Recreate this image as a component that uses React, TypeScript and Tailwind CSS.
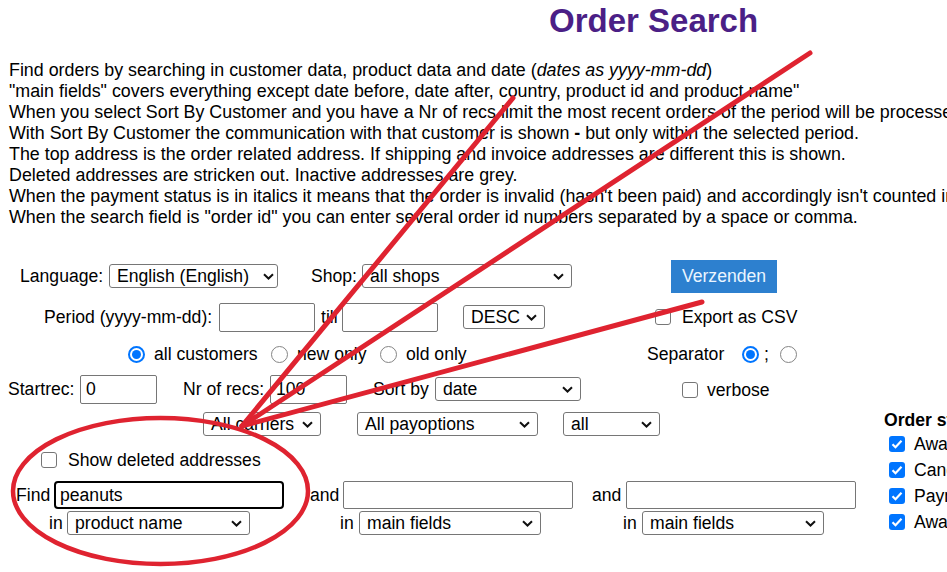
import React from "react";

const Chevron = () => (
  <svg width="11" height="7" viewBox="0 0 11 7" className="shrink-0">
    <path d="M1 1.2l4.5 4.3L10 1.2" fill="none" stroke="#111" strokeWidth="2" />
  </svg>
);

const Select = ({ value, className }: { value: string; className: string }) => (
  <div
    className={`flex items-center justify-between shrink-0 h-[24px] border border-[#767676] rounded-[3px] bg-white pl-[7px] pr-[7px] pt-[1px] ${className}`}
  >
    <span>{value}</span>
    <Chevron />
  </div>
);

const Input = ({ value, className }: { value?: string; className: string }) => (
  <div
    className={`flex items-center shrink-0 h-[29px] border border-[#767676] rounded-[2px] bg-white pl-[5px] pt-[1px] ${className}`}
  >
    {value}
  </div>
);

const Checkbox = ({ className }: { className?: string }) => (
  <div className={`shrink-0 w-[16px] h-[16px] border border-[#767676] rounded-[3px] bg-white ${className ?? ""}`} />
);

const CheckedBox = () => (
  <div className="shrink-0 w-[16px] h-[16px] rounded-[3px] bg-[#0075ff] flex items-center justify-center">
    <svg width="12" height="10" viewBox="0 0 12 10">
      <path d="M1.5 5.2l3 3L10.5 1.8" fill="none" stroke="white" strokeWidth="2.2" />
    </svg>
  </div>
);

const Radio = ({ checked }: { checked?: boolean }) =>
  checked ? (
    <div className="shrink-0 w-[17px] h-[17px] rounded-full border-2 border-[#0075ff] p-[2px] bg-white">
      <div className="w-full h-full rounded-full bg-[#0075ff]" />
    </div>
  ) : (
    <div className="shrink-0 w-[17px] h-[17px] rounded-full border border-[#858585] bg-white" />
  );

const statuses = ["Awaiting payment", "Cancelled", "Payment accepted", "Awaiting shipment"];

export default function App() {
  return (
    <div className="relative w-full h-[572px] overflow-hidden bg-white text-black font-['Liberation_Sans',Arial,sans-serif] text-[17.6px] whitespace-nowrap">
      {/* title */}
      <div className="mt-[2px] pl-[549px] leading-[38px] text-[33px] font-bold text-[#4b1f86]">
        Order Search
      </div>

      {/* intro text */}
      <div className="mt-[20px] pl-[9px] leading-[21px] text-[17.85px]">
        <div>
          Find orders by searching in customer data, product data and date (<i>dates as yyyy-mm-dd</i>)
        </div>
        <div>"main fields" covers everything except date before, date after, country, product id and product name"</div>
        <div>
          When you select Sort By Customer and you have a Nr of recs limit the most recent orders of the period will be processed.
        </div>
        <div>
          With Sort By Customer the communication with that customer is shown <b>-</b> but only within the selected period.
        </div>
        <div>The top address is the order related address. If shipping and invoice addresses are different this is shown.</div>
        <div>Deleted addresses are stricken out. Inactive addresses are grey.</div>
        <div>
          When the payment status is in italics it means that the order is invalid (hasn't been paid) and accordingly isn't counted in the totals.
        </div>
        <div>When the search field is "order id" you can enter several order id numbers separated by a space or comma.</div>
      </div>

      {/* form */}
      <div className="mt-[29px] leading-none">
        <div className="flex items-center h-[38px] pl-[20px]">
          <span className="shrink-0 w-[89px] pt-[2px]">Language:</span>
          <Select value="English (English)" className="w-[169px] !pr-[3px]" />
          <span className="shrink-0 ml-[33px] w-[51px] pt-[2px]">Shop:</span>
          <Select value="all shops" className="w-[210px]" />
          <button className="shrink-0 ml-[99px] w-[106px] h-[33px] bg-[#2d80cf] text-[#eaf5ff] pt-[1px]">Verzenden</button>
        </div>

        <div className="flex items-center h-[44px] pl-[44px]">
          <span className="shrink-0 w-[175px] pt-[2px]">Period (yyyy-mm-dd):</span>
          <Input className="w-[96px]" />
          <span className="shrink-0 ml-[6px] w-[21px] pt-[2px]">till</span>
          <Input className="w-[96px]" />
          <Select value="DESC" className="ml-[25px] w-[82px]" />
          <Checkbox className="ml-[110px]" />
          <span className="shrink-0 ml-[11px] pt-[2px]">Export as CSV</span>
        </div>

        <div className="flex items-center h-[30px] pl-[128px]">
          <Radio checked />
          <span className="shrink-0 ml-[9px] w-[117px] pt-[2px]">all customers</span>
          <Radio />
          <span className="shrink-0 ml-[9px] w-[83px] pt-[2px]">new only</span>
          <Radio />
          <span className="shrink-0 ml-[9px] w-[241px] pt-[2px]">old only</span>
          <span className="shrink-0 w-[95px] pt-[2px]">Separator</span>
          <Radio checked />
          <span className="shrink-0 ml-[5px] w-[16px] pt-[2px]">;</span>
          <Radio />
        </div>

        <div className="flex items-center h-[40px] pl-[8px]">
          <span className="shrink-0 w-[72px] pt-[2px]">Startrec:</span>
          <Input value="0" className="w-[77px]" />
          <span className="shrink-0 ml-[26px] w-[87px] pt-[2px]">Nr of recs:</span>
          <Input value="100" className="w-[77px]" />
          <span className="shrink-0 ml-[26px] w-[62px] pt-[2px]">Sort by</span>
          <Select value="date" className="w-[146px]" />
          <Checkbox className="ml-[101px] mt-[2px]" />
          <span className="shrink-0 ml-[9px] pt-[3px]">verbose</span>
        </div>

        <div className="flex">
          <div className="shrink-0 w-[884px]">
            <div className="flex items-center h-[30px] pl-[203px]">
              <Select value="All carriers" className="w-[118px]" />
              <Select value="All payoptions" className="ml-[36px] w-[181px]" />
              <Select value="all" className="ml-[25px] w-[97px]" />
            </div>
            <div className="flex items-center h-[42px] pl-[41px]">
              <Checkbox />
              <span className="shrink-0 ml-[11px] pt-[2px]">Show deleted addresses</span>
            </div>
            <div className="flex items-center h-[28px] pl-[16px]">
              <span className="shrink-0 w-[38px] pt-[2px]">Find</span>
              <div className="flex items-center shrink-0 w-[230px] h-[28px] border-2 border-black rounded-[4px] pl-[4px] pt-[1px]">
                peanuts
              </div>
              <span className="shrink-0 ml-[26px] w-[33px] pt-[2px]">and</span>
              <Input className="w-[230px] !h-[28px]" />
              <span className="shrink-0 ml-[19px] w-[34px] pt-[2px]">and</span>
              <Input className="w-[230px] !h-[28px]" />
            </div>
            <div className="flex items-center h-[28px] pl-[49px]">
              <span className="shrink-0 w-[18px] pt-[2px]">in</span>
              <Select value="product name" className="w-[183px]" />
              <span className="shrink-0 ml-[90px] w-[19px] pt-[2px]">in</span>
              <Select value="main fields" className="w-[182px]" />
              <span className="shrink-0 ml-[82px] w-[19px] pt-[2px]">in</span>
              <Select value="main fields" className="w-[182px]" />
            </div>
          </div>

          {/* order status */}
          <div className="shrink-0">
            <div className="h-[21px] flex items-center font-bold pt-[2px]">Order status</div>
            {statuses.map((s) => (
              <div key={s} className="h-[26px] flex items-center pl-[5px] pt-[1px]">
                <CheckedBox />
                <span className="shrink-0 ml-[9px] pt-[2px]">{s}</span>
              </div>
            ))}
          </div>
        </div>
      </div>

      {/* red annotation drawn over the page */}
      <svg className="absolute inset-0 pointer-events-none" width="947" height="572" viewBox="0 0 947 572">
        <g stroke="#df2330" strokeWidth="5" strokeLinecap="round" fill="none">
          <line x1="242" y1="426" x2="810" y2="53" />
          <line x1="242" y1="426" x2="513" y2="98" />
          <line x1="242" y1="426" x2="702" y2="302" />
          <ellipse cx="160.5" cy="491" rx="147.5" ry="73" strokeWidth="4.5" />
        </g>
      </svg>
    </div>
  );
}
